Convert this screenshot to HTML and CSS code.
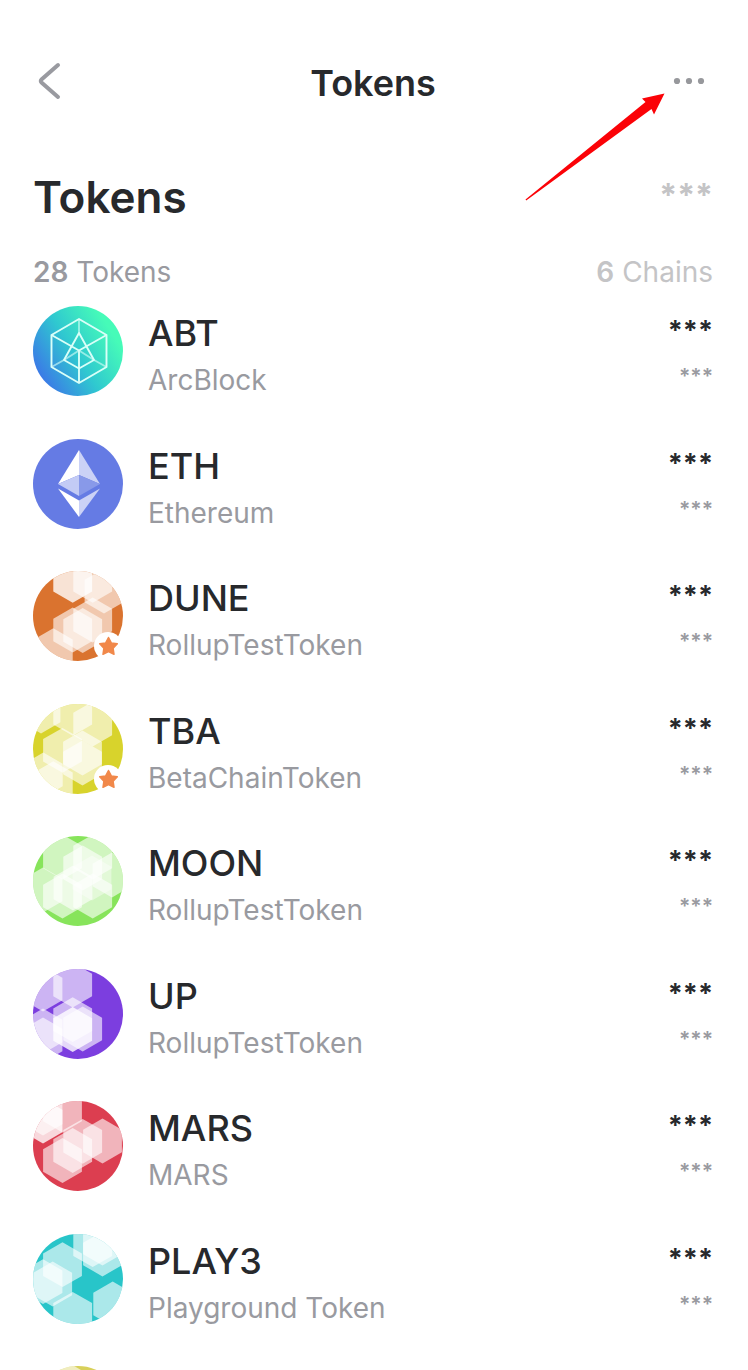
FILE: index.html
```html
<!DOCTYPE html>
<html lang="en">
<head>
<meta charset="utf-8">
<meta name="viewport" content="width=device-width, initial-scale=1">
<title>Tokens</title>
<link rel="stylesheet" href="styles.css">
</head>
<body>
<svg class="defs" aria-hidden="true">
  <defs>
    <path id="hex" d="M0-22.4 19.4-11.2V11.2L0 22.4-19.4 11.2V-11.2Z"/>
    <clipPath id="disc"><circle cx="45" cy="45" r="45"/></clipPath>
    <linearGradient id="abt" x1="0.05" y1="0.75" x2="0.85" y2="0.25">
      <stop offset="0" stop-color="#3b78e7"/><stop offset="0.5" stop-color="#2fc8d0"/><stop offset="1" stop-color="#46fbb8"/>
    </linearGradient>
    <path id="star" d="M0-9 2.800-3.600 8.800-2.700 4.600 1.700 5.500 7.800 0 5.100-5.500 7.800-4.600 1.700-8.800-2.700-2.800-3.600Z" stroke-width="1.500" stroke-linejoin="round"/>
  </defs>
</svg>
<div class="screen">
  <header class="topbar">
    <button class="icon-button" type="button" aria-label="Back">
      <svg width="24" height="40" viewBox="0 0 24 40"><path d="M21 4 4.500 18.500Q3 20 4.500 21.500L21 36" fill="none" stroke="#999aa0" stroke-width="4" stroke-linecap="round"/></svg>
    </button>
    <h2 class="topbar-title">Tokens</h2>
    <button class="icon-button more" type="button" aria-label="More options">
      <svg width="32" height="8" viewBox="0 0 32 8" fill="#97989c"><circle cx="4" cy="4" r="3.100"/><circle cx="16" cy="4" r="3.100"/><circle cx="28" cy="4" r="3.100"/></svg>
    </button>
    <svg class="pointer" width="140" height="108" viewBox="0 0 140 108" aria-hidden="true"><path d="M0.500 106.500 120.500 9 117 5.500 139.500 0.500 129 21.500 126.500 16 1.200 107.500Z" fill="#fb0207"/></svg>
  </header>
  <main>
    <section class="summary">
      <div class="summary-row heading-row"><h1>Tokens</h1><span class="total">***</span></div>
      <div class="summary-row counts"><span><b>28</b> Tokens</span><span class="chains"><b>6</b> Chains</span></div>
    </section>
    <ul class="tokens">
      <li class="token">
        <svg class="avatar" viewBox="0 0 90 90"><circle cx="45" cy="45" r="45" fill="url(#abt)"/><g fill="none" stroke="#d9fff8" stroke-width="1.900" stroke-linejoin="round"><path d="M46 13 73.500 29V61L46 77 18.500 61V29Z"/><path d="M18.500 29 46 44.500 73.500 29M46 44.500V77M46 27 31 54 46 62.500 61 54Z"/><path d="M46 13V27M18.500 61 31 54M61 54 73.500 61M31 54 46 44.500 61 54" opacity=".6"/></g></svg>
        <div class="token-name"><strong>ABT</strong><span>ArcBlock</span></div>
        <div class="token-value"><strong>***</strong><span>***</span></div>
      </li>
      <li class="token">
        <svg class="avatar" viewBox="0 0 90 90"><circle cx="45" cy="45" r="45" fill="#657be4"/><path d="M46 11V36L25 45Z" fill="#fff"/><path d="M46 11 67 45 46 36Z" fill="#cbd2f6"/><path d="M25 45 46 36V57Z" fill="#c3cbf5"/><path d="M67 45 46 36V57Z" fill="#8899e9"/><path d="M25 49.500 46 61.500V78Z" fill="#fff"/><path d="M67 49.500 46 61.500V78Z" fill="#cbd2f6"/></svg>
        <div class="token-name"><strong>ETH</strong><span>Ethereum</span></div>
        <div class="token-value"><strong>***</strong><span>***</span></div>
      </li>
      <li class="token">
        <svg class="avatar" viewBox="0 0 90 90"><g clip-path="url(#disc)"><path d="M0 0H90V90H0Z" fill="#da732f"/><g class="cells">
          <use href="#hex" x="39.700" y="9.300" class="strong"/><use href="#hex" x="59.700" y="9.300"/><use href="#hex" x="71" y="20"/><use href="#hex" x="39.700" y="59"/><use href="#hex" x="49.700" y="59.500"/><use href="#hex" x="59.700" y="49"/><use href="#hex" x="20.300" y="79.700"/></g></g>
          <circle cx="75" cy="75" r="14" fill="#fff"/><use href="#star" x="75.500" y="75.500" fill="#f1884a" stroke="#f1884a"/></svg>
        <div class="token-name"><strong>DUNE</strong><span>RollupTestToken</span></div>
        <div class="token-value"><strong>***</strong><span>***</span></div>
      </li>
      <li class="token">
        <svg class="avatar" viewBox="0 0 90 90"><g clip-path="url(#disc)"><path d="M0 0H90V90H0Z" fill="#d8d32c"/><g class="cells">
          <use href="#hex" x="8" y="7"/><use href="#hex" x="39.700" y="9.300"/><use href="#hex" x="59.700" y="20"/><use href="#hex" x="29.500" y="46.300"/><use href="#hex" x="49.500" y="59"/><use href="#hex" x="49.500" y="49"/><use href="#hex" x="10.300" y="71"/><use href="#hex" x="20.300" y="79.700"/></g></g>
          <circle cx="75" cy="75" r="14" fill="#fff"/><use href="#star" x="75.500" y="75.500" fill="#f1884a" stroke="#f1884a"/></svg>
        <div class="token-name"><strong>TBA</strong><span>BetaChainToken</span></div>
        <div class="token-value"><strong>***</strong><span>***</span></div>
      </li>
      <li class="token">
        <svg class="avatar" viewBox="0 0 90 90"><g clip-path="url(#disc)"><path d="M0 0H90V90H0Z" fill="#87e45b"/><g class="cells">
          <use href="#hex" x="29.500" y="21"/><use href="#hex" x="59.700" y="21"/><use href="#hex" x="10" y="54"/><use href="#hex" x="29.500" y="60"/><use href="#hex" x="59.700" y="60"/><use href="#hex" x="79" y="39"/><use href="#hex" x="49.700" y="32"/><use href="#hex" x="40" y="52"/><use href="#hex" x="59" y="42" class="soft"/></g></g></svg>
        <div class="token-name"><strong>MOON</strong><span>RollupTestToken</span></div>
        <div class="token-value"><strong>***</strong><span>***</span></div>
      </li>
      <li class="token">
        <svg class="avatar" viewBox="0 0 90 90"><g clip-path="url(#disc)"><path d="M0 0H90V90H0Z" fill="#7c3edf"/><g class="cells">
          <use href="#hex" x="10" y="20"/><use href="#hex" x="39.700" y="16"/><use href="#hex" x="39.700" y="50.700"/><use href="#hex" x="49.700" y="60"/><use href="#hex" x="39.700" y="60.500" class="strong"/><use href="#hex" x="10" y="62"/><use href="#hex" x="10" y="71"/></g></g></svg>
        <div class="token-name"><strong>UP</strong><span>RollupTestToken</span></div>
        <div class="token-value"><strong>***</strong><span>***</span></div>
      </li>
      <li class="token">
        <svg class="avatar" viewBox="0 0 90 90"><g clip-path="url(#disc)"><path d="M0 0H90V90H0Z" fill="#dc3e50"/><g class="cells">
          <use href="#hex" x="10" y="20" class="strong"/><use href="#hex" x="10" y="12"/><use href="#hex" x="29.500" y="9"/><use href="#hex" x="29.500" y="59.500"/><use href="#hex" x="39.700" y="49.500"/><use href="#hex" x="49.700" y="40.300"/><use href="#hex" x="69.500" y="40"/></g></g></svg>
        <div class="token-name"><strong>MARS</strong><span>MARS</span></div>
        <div class="token-value"><strong>***</strong><span>***</span></div>
      </li>
      <li class="token">
        <svg class="avatar" viewBox="0 0 90 90"><g clip-path="url(#disc)"><path d="M0 0H90V90H0Z" fill="#28c5c9"/><g class="cells">
          <use href="#hex" x="29.500" y="30.700"/><use href="#hex" x="59.700" y="10.700"/><use href="#hex" x="69.500" y="20"/><use href="#hex" x="69.500" y="9"/><use href="#hex" x="19.700" y="50"/><use href="#hex" x="10" y="47.700"/><use href="#hex" x="39.700" y="80.300"/><use href="#hex" x="79.700" y="70"/></g></g></svg>
        <div class="token-name"><strong>PLAY3</strong><span>Playground Token</span></div>
        <div class="token-value"><strong>***</strong><span>***</span></div>
      </li>
      <li class="token" aria-hidden="true">
        <svg class="avatar" viewBox="0 0 90 90"><g clip-path="url(#disc)"><path d="M0 0H90V90H0Z" fill="#d8d05a"/><g class="cells"><use href="#hex" x="30" y="16"/></g></g></svg>
      </li>
    </ul>
  </main>
</div>
</body>
</html>
```

FILE: styles.css
```css
* { box-sizing: border-box; }
body { margin: 0; background: #fff; color: #27292c; font-family: Inter, "Noto Sans", sans-serif; }
h1, h2, ul { margin: 0; padding: 0; }
.defs { position: absolute; width: 0; height: 0; }
.screen { height: 100vh; overflow: hidden; padding: 56px 35px 0 33px; }

.topbar { position: relative; display: grid; grid-template-columns: 48px 1fr 48px; height: 52px; }
.topbar-title { text-align: center; font-size: 36px; line-height: 54px; font-weight: 600; }
.icon-button { display: flex; align-items: center; height: 50px; padding: 0 4px; border: 0; background: none; cursor: pointer; }
.more { justify-content: flex-end; padding: 0 8px; }
.pointer { position: absolute; right: 48px; top: 37px; pointer-events: none; }

.summary { padding-top: 60px; }
.summary-row { display: flex; justify-content: space-between; }
.heading-row { height: 60px; }
h1 { font-size: 44px; line-height: 58px; font-weight: 600; }
.total { color: #c4c4c6; font-size: 32px; line-height: 56px; font-weight: 700; }
.counts { margin-top: 24px; color: #999aa0; font-size: 28px; line-height: 40px; }
.counts b { font-weight: 600; }
.chains { color: #c4c4c6; }

.tokens { list-style: none; padding-top: 14px; }
.token { display: grid; grid-template-columns: 90px 1fr auto; column-gap: 25px; height: 94px; margin-bottom: 39px; }
.token:nth-child(even) { margin-bottom: 38px; }
.avatar { display: block; width: 90px; height: 90px; }
.cells { fill: #fff; fill-opacity: .61; }
.cells .strong { fill-opacity: .8; }
.cells .soft { fill-opacity: .4; }
.token-name, .token-value { display: flex; flex-direction: column; }
.token-name strong { font-size: 36px; line-height: 54px; font-weight: 500; }
.token-name span { color: #999aa0; font-size: 28px; line-height: 40px; }
.token-value { text-align: right; }
.token-value strong { font-size: 27px; line-height: 50px; font-weight: 700; }
.token-value span { color: #999aa0; font-size: 21px; line-height: 42px; font-weight: 600; }
```
